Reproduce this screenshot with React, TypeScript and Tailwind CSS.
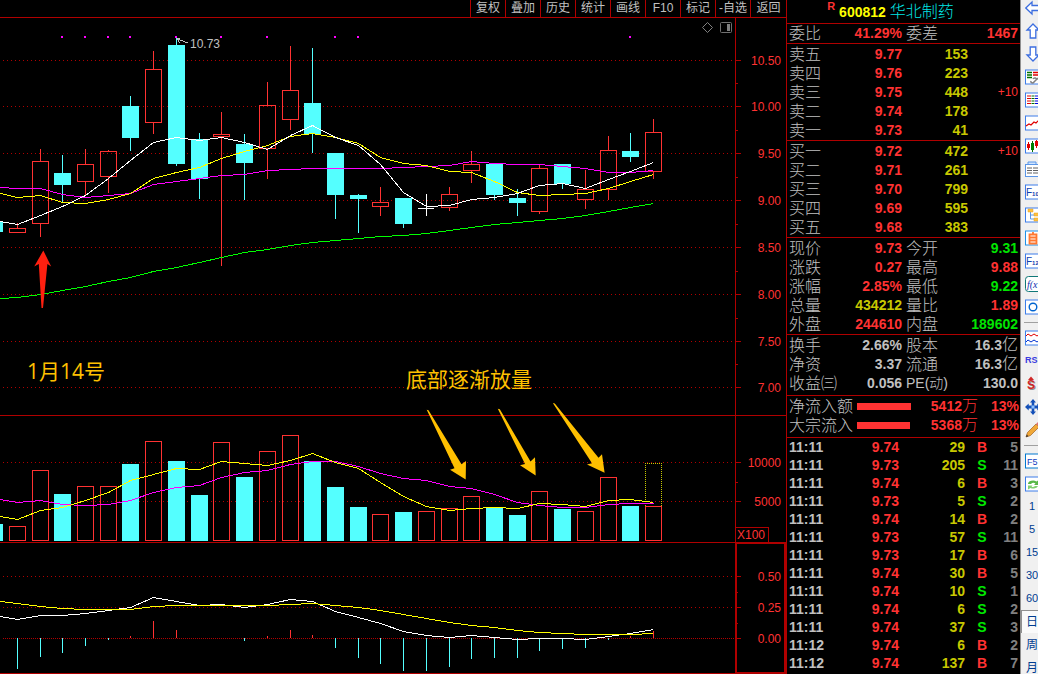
import React from "react";

type Candle = {
  x: number;
  up?: boolean;
  flat?: boolean;
  body: [number, number];
  wick: [number, number];
  vol: number;
};

const RED = "#ff3232";
const CYAN = "#54ffff";
const LINE = "#b00000";

const XS = [
  0, 17, 40, 62, 85, 108, 130, 153, 176, 199, 221, 244, 267, 290, 312, 335, 358, 380, 403, 426, 449, 471, 494, 517,
  539, 562, 585, 608, 630, 653,
];

const CANDLES: Candle[] = [
  { x: -6, body: [221, 232], wick: [221, 232], vol: 524 },
  { x: 17, up: true, body: [228, 233], wick: [223, 233], vol: 526 },
  { x: 40, up: true, body: [161, 224], wick: [149, 237], vol: 470 },
  { x: 62, body: [173, 185], wick: [155, 202], vol: 494 },
  { x: 85, up: true, body: [164, 182], wick: [149, 195], vol: 486 },
  { x: 108, up: true, body: [151, 177], wick: [150, 193], vol: 486 },
  { x: 130, body: [106, 138], wick: [96, 151], vol: 464 },
  { x: 153, up: true, body: [69, 123], wick: [51, 134], vol: 441 },
  { x: 176, body: [45, 164], wick: [38, 166], vol: 461 },
  { x: 199, body: [139, 179], wick: [133, 199], vol: 495 },
  { x: 221, up: true, body: [134, 137], wick: [112, 266], vol: 442 },
  { x: 244, body: [144, 163], wick: [134, 200], vol: 477 },
  { x: 267, up: true, body: [105, 149], wick: [82, 179], vol: 451 },
  { x: 290, up: true, body: [90, 120], wick: [46, 130], vol: 435 },
  { x: 312, body: [103, 134], wick: [48, 153], vol: 461 },
  { x: 335, body: [153, 195], wick: [153, 219], vol: 487 },
  { x: 358, body: [195, 199], wick: [194, 233], vol: 507 },
  { x: 380, up: true, body: [202, 207], wick: [187, 216], vol: 514 },
  { x: 403, body: [198, 224], wick: [198, 228], vol: 512 },
  { x: 426, up: true, flat: true, body: [208, 209], wick: [194, 216], vol: 511 },
  { x: 449, up: true, body: [194, 208], wick: [187, 211], vol: 508 },
  { x: 471, up: true, body: [164, 171], wick: [151, 183], vol: 496 },
  { x: 494, body: [164, 195], wick: [164, 200], vol: 507 },
  { x: 517, body: [198, 203], wick: [189, 216], vol: 515 },
  { x: 539, up: true, body: [168, 212], wick: [165, 214], vol: 491 },
  { x: 562, body: [164, 184], wick: [164, 189], vol: 509 },
  { x: 585, up: true, body: [189, 200], wick: [170, 209], vol: 511 },
  { x: 608, up: true, body: [150, 190], wick: [136, 200], vol: 477 },
  { x: 630, body: [151, 157], wick: [133, 162], vol: 506 },
  { x: 653, up: true, body: [132, 172], wick: [119, 179], vol: 506 },
];

const MA5 = [221, 224, 215, 206, 195, 178, 160, 142, 137, 140, 137, 142, 149, 135, 125, 137, 145, 164, 192, 206, 205, 199, 197, 193, 185, 183, 188, 179, 171, 162];
const MA10 = [193, 197, 195, 202, 203, 199, 193, 178, 172, 167, 158, 151, 145, 136, 133, 137, 143, 157, 163, 165, 171, 172, 181, 192, 195, 194, 193, 188, 181, 174];
const MA20 = [187, 188, 188, 194, 197, 195, 193, 184, 181, 178, 175, 174, 170, 169, 168, 168, 168, 168, 167, 166, 165, 161, 163, 164, 164, 166, 168, 172, 172, 170];
const MA60 = [298, 297, 294, 290, 286, 281, 277, 271, 267, 262, 257, 252, 249, 245, 242, 240, 238, 236, 235, 233, 230, 227, 224, 222, 220, 218, 215, 211, 207, 203];
const VMA5 = [516, 519, 510, 507, 500, 492, 480, 474, 468, 469, 461, 463, 465, 460, 453, 462, 468, 482, 496, 506, 510, 508, 507, 508, 503, 504, 506, 500, 499, 502];
const VMA10 = [499, 502, 500, 504, 505, 504, 500, 492, 487, 485, 477, 472, 470, 464, 461, 461, 466, 473, 478, 480, 486, 488, 494, 502, 505, 507, 507, 504, 503, 503];
const DIF = [616, 619, 615, 615, 613, 610, 607, 597, 601, 605, 604, 607, 604, 599, 601, 611, 617, 623, 631, 635, 637, 635, 637, 639, 638, 638, 639, 636, 633, 629];
const DEA = [601, 603, 606, 608, 609, 609, 609, 606, 605, 605, 605, 605, 605, 604, 603, 605, 607, 610, 614, 618, 622, 625, 627, 630, 632, 633, 634, 634, 634, 633];

const HIST: [number, number][] = [
  [17, 669], [40, 657], [62, 653], [85, 646], [108, 640], [130, 636], [153, 621], [176, 630], [244, 641], [267, 636],
  [290, 630], [312, 635], [335, 648], [358, 658], [380, 664], [403, 671], [426, 671], [449, 667], [471, 659],
  [494, 658], [517, 658], [539, 651], [562, 649], [585, 648], [608, 640], [630, 636], [653, 631],
];

const SIGNAL_DOTS = [62, 85, 108, 130, 176, 221, 267, 335, 358, 630];

const PRICE_LABELS: [number, string][] = [
  [60, "10.50"], [106, "10.00"], [153, "9.50"], [200, "9.00"], [247, "8.50"], [294, "8.00"], [341, "7.50"], [387, "7.00"],
];

function Grid({ y, dense }: { y: number; dense?: boolean }) {
  return (
    <line x1="3" x2="100%" y1={y + 0.5} y2={y + 0.5} stroke={LINE} strokeDasharray={dense ? "1 1" : "1 3"} />
  );
}

function Curve({ ys, color }: { ys: number[]; color: string }) {
  return (
    <polyline fill="none" stroke={color} points={ys.map((y, i) => `${XS[i]}.5,${y}.5`).join(" ")} />
  );
}

function PricePlot() {
  return (
    <svg className="block h-full w-full" shapeRendering="crispEdges" role="img" aria-label="日K线">
      <g transform="translate(0 -18)">
        {PRICE_LABELS.map(([y]) => (
          <Grid key={y} y={y} />
        ))}
        {CANDLES.map((c) => {
          const [t, b] = c.body;
          const [hi, lo] = c.wick;
          if (c.flat) {
            return (
              <g key={c.x} fill="#ffffff">
                <rect x={c.x} y={hi} width="1" height={lo - hi} />
                <rect x={c.x - 8} y={t} width="16" height="1" />
              </g>
            );
          }
          if (c.up) {
            return (
              <g key={c.x}>
                <rect x={c.x} y={hi} width="1" height={t - hi} fill={RED} />
                <rect x={c.x} y={b} width="1" height={lo - b} fill={RED} />
                <rect x={c.x - 7.5} y={t + 0.5} width="16" height={b - t - 1} fill="none" stroke={RED} />
              </g>
            );
          }
          return (
            <g key={c.x} fill={CYAN}>
              <rect x={c.x} y={hi} width="1" height={lo - hi} />
              <rect x={c.x - 8} y={t} width="17" height={b - t} />
            </g>
          );
        })}
        <Curve ys={MA60} color="#00ff00" />
        <Curve ys={MA20} color="#ff00ff" />
        <Curve ys={MA10} color="#ffff00" />
        <Curve ys={MA5} color="#ffffff" />
        <path d="M176.500 38.500h3M177.500 39l10.500 4M177.500 39l2 4" fill="none" stroke="#c0c0c0" />
        {SIGNAL_DOTS.map((x) => (
          <rect key={x} x={x - 1} y="36" width="2" height="2" fill="#ff00ff" />
        ))}
        <text x="190" y="48" fontSize="12" fill="#c0c0c0">10.73</text>
      </g>
    </svg>
  );
}

function VolumePlot() {
  return (
    <svg className="block h-full w-full" shapeRendering="crispEdges" role="img" aria-label="成交量">
      <g transform="translate(0 -416)">
        <Grid y={462} />
        <Grid y={501} />
        {CANDLES.map((c) =>
          c.up ? (
            <rect key={c.x} x={c.x - 7.5} y={c.vol + 0.5} width="16" height={540 - c.vol} fill="none" stroke={RED} />
          ) : (
            <rect key={c.x} x={c.x - 8} y={c.vol} width="17" height={541 - c.vol} fill={CYAN} />
          ),
        )}
        <path d="M645.500 506V463.500H661.500V506" fill="none" stroke="#c8c800" strokeDasharray="1 1" />
        <Curve ys={VMA10} color="#ff00ff" />
        <Curve ys={VMA5} color="#ffff00" />
      </g>
    </svg>
  );
}

function MacdPlot() {
  return (
    <svg className="block h-full w-full" shapeRendering="crispEdges" role="img" aria-label="MACD">
      <g transform="translate(0 -543)">
        <Grid y={576} />
        <Grid y={607} />
        <Grid y={638} dense />
        {HIST.map(([x, y]) => (
          <rect
            key={x}
            x={x}
            y={Math.min(y, 638)}
            width="1"
            height={Math.abs(y - 638)}
            fill={y < 638 ? RED : CYAN}
          />
        ))}
        <Curve ys={DIF} color="#ffffff" />
        <Curve ys={DEA} color="#ffff00" />
      </g>
    </svg>
  );
}

function Axis({ top, left, labels, minor }: { top: number; left: number; labels: [number, string][]; minor: number[] }) {
  return (
    <svg className="block h-full w-full">
      <g transform={`translate(${-left} ${-top})`}>
        {labels.map(([y, t]) => (
          <g key={y}>
            <rect x="0" y={y} width="5" height="1" fill={LINE} />
            <text x="45" y={y + 5} fontSize="12" textAnchor="end" fill={RED}>{t}</text>
          </g>
        ))}
        {minor.map((y) => (
          <rect key={y} x="0" y={y} width="2" height="1" fill={LINE} />
        ))}
      </g>
    </svg>
  );
}

function Annotations() {
  return (
    <svg className="pointer-events-none absolute inset-0 h-full w-full font-['Open_Sans','Noto_Sans_CJK_SC',sans-serif]">
      <g transform="translate(0 -18)">
        <polygon points="43.300,250.500 51.200,266.500 47.400,264 43,308 41.500,308 38.800,264 34.200,266.500" fill="#ff2010" />
        <g fill="#ffc000">
          <polygon points="426.700,409.700 428.500,410.200 461.500,464.300 466,461 465.700,479.500 450,469.700 454.500,468.300" />
          <polygon points="497.800,408.700 499.800,409.200 530.500,461.500 535,457.300 535.700,475.500 520,465.300 525,464" />
          <polygon points="552.800,403 554.800,403.500 598.500,457.700 602,454.300 604.600,472.700 587,464.500 592,463.300" />
          <text x="27" y="379" fontSize="21">1月14号</text>
          <text x="406" y="387" fontSize="21">底部逐渐放量</text>
        </g>
      </g>
    </svg>
  );
}

const MENU = ["复权", "叠加", "历史", "统计", "画线", "F10", "标记", "-自选", "返回"];

function ChartArea() {
  return (
    <main className="flex min-w-0 flex-1 flex-col">
      <nav className="flex h-[18px] justify-end border-b border-[#b00000] text-xs leading-none text-[#c0c0c0]">
        {MENU.map((m) => (
          <button key={m} type="button" className="w-[35px] border-l border-[#b00000] pb-[2px] whitespace-nowrap last:w-[36px]">
            {m}
          </button>
        ))}
      </nav>
      <div className="relative flex flex-col">
        <section className="flex h-[398px] border-b border-[#b00000]">
          <div className="min-w-0 flex-1"><PricePlot /></div>
          <div className="w-[51px] border-l border-[#b00000]">
            <Axis top={18} left={0} labels={PRICE_LABELS} minor={[83, 130, 177, 224, 271, 318, 364]} />
          </div>
        </section>
        <section className="flex h-[127px] border-b border-[#b00000]">
          <div className="min-w-0 flex-1"><VolumePlot /></div>
          <div className="relative w-[51px] border-l border-[#b00000]">
            <Axis top={416} left={0} labels={[[462, "10000"], [501, "5000"]]} minor={[482]} />
            <span className="absolute bottom-0 left-0 border-t border-r border-[#b00000] pr-[3px] pl-px text-xs leading-[14px] text-[#ff3232]">
              X100
            </span>
          </div>
        </section>
        <section className="flex h-[131px] border-b border-[#b00000]">
          <div className="min-w-0 flex-1"><MacdPlot /></div>
          <div className="w-[51px] border-2 border-t-1 border-b-1 border-[#b00000]">
            <Axis top={544} left={1} labels={[[576, "0.50"], [607, "0.25"], [638, "0.00"]]} minor={[592, 623]} />
          </div>
        </section>
        <Annotations />
        <div className="absolute top-1 right-[54px] flex gap-[7px]">
          <button type="button" aria-label="标记点">
            <svg width="11" height="11" className="block"><path d="M5.500 .5l5 5-5 5-5-5z" fill="none" stroke="#808080" /></svg>
          </button>
          <button type="button" aria-label="侧栏">
            <svg width="12" height="11" className="block">
              <rect x=".5" y=".5" width="11" height="10" rx="1" fill="none" stroke="#707070" />
              <rect x="7" y="2" width="3" height="7" fill="#808080" />
            </svg>
          </button>
        </div>
      </div>
    </main>
  );
}

const SELL = [["卖五", "9.77", "153", ""], ["卖四", "9.76", "223", ""], ["卖三", "9.75", "448", "+10"], ["卖二", "9.74", "178", ""], ["卖一", "9.73", "41", ""]];
const BUY = [["买一", "9.72", "472", "+10"], ["买二", "9.71", "261", ""], ["买三", "9.70", "799", ""], ["买四", "9.69", "595", ""], ["买五", "9.68", "383", ""]];

function Levels({ rows }: { rows: string[][] }) {
  return (
    <table className="w-full table-fixed border-b border-[#b00000]">
      <colgroup>
        <col className="w-[50px]" />
        <col className="w-[65px]" />
        <col className="w-[66px]" />
        <col />
      </colgroup>
      <tbody>
        {rows.map(([l, p, v, d]) => (
          <tr key={l} className="h-[19px]">
            <th scope="row" className="p-0 pl-[2px] text-left text-base leading-[19px] font-light whitespace-nowrap text-[#c0c0c0]">{l}</th>
            <td className="p-0 text-right leading-[19px] font-bold text-[#ff3232]">{p}</td>
            <td className="p-0 text-right leading-[19px] font-bold text-[#c8c800]">{v}</td>
            <td className="p-0 pr-[2px] text-right text-xs leading-[19px] text-[#ff3232]">{d}</td>
          </tr>
        ))}
      </tbody>
    </table>
  );
}

const R = "text-[#ff3232]";
const G = "text-[#00e600]";
const Y = "text-[#c8c800]";
const W = "text-[#c0c0c0]";

const STATS = [
  ["现价", "9.73", R, "今开", "9.31", G],
  ["涨跌", "0.27", R, "最高", "9.88", R],
  ["涨幅", "2.85%", R, "最低", "9.22", G],
  ["总量", "434212", Y, "量比", "1.89", R],
  ["外盘", "244610", R, "内盘", "189602", G],
];
const BASICS = [
  ["换手", "2.66%", W, "股本", "16.3亿", W],
  ["净资", "3.37", W, "流通", "16.3亿", W],
  ["收益㈢", "0.056", W, "PE(动)", "130.0", W],
];

function Pairs({ rows }: { rows: string[][] }) {
  return (
    <table className="w-full table-fixed">
      <colgroup>
        <col className="w-[50px]" />
        <col className="w-[65px]" />
        <col className="w-[50px]" />
        <col />
      </colgroup>
      <tbody>
        {rows.map(([a, av, ac, b, bv, bc]) => (
          <tr key={a} className="h-[19px]">
            <th scope="row" className="p-0 pl-[2px] text-left text-base leading-[19px] font-light whitespace-nowrap text-[#c0c0c0]">{a}</th>
            <td className={`p-0 text-right leading-[19px] font-bold ${ac}`}>{av}</td>
            <th
              scope="row"
              className={`p-0 pl-1 text-left leading-[19px] font-light whitespace-nowrap text-[#c0c0c0] ${b.startsWith("PE") ? "text-sm" : "text-base"}`}
            >
              {b}
            </th>
            <td className={`p-0 pr-[2px] text-right leading-[19px] font-bold whitespace-nowrap ${bc}`}>
              {bv.replace("亿", "")}
              {bv.endsWith("亿") && <span className="text-base leading-none font-light">亿</span>}
            </td>
          </tr>
        ))}
      </tbody>
    </table>
  );
}

const FLOWS = [["净流入额", "w-[54px]", "5412"], ["大宗流入", "w-[53px]", "5368"]];

const TICKS = [
  ["11:11", "9.74", "29", "B", "5"],
  ["11:11", "9.73", "205", "S", "11"],
  ["11:11", "9.74", "6", "B", "3"],
  ["11:11", "9.73", "5", "S", "2"],
  ["11:11", "9.74", "14", "B", "2"],
  ["11:11", "9.73", "57", "S", "11"],
  ["11:11", "9.73", "17", "B", "6"],
  ["11:11", "9.74", "30", "B", "5"],
  ["11:11", "9.74", "10", "S", "1"],
  ["11:11", "9.74", "6", "S", "2"],
  ["11:11", "9.74", "37", "S", "3"],
  ["11:12", "9.74", "6", "B", "2"],
  ["11:12", "9.74", "137", "B", "7"],
];

function QuotePanel() {
  return (
    <aside className="w-[234px] shrink-0 border-l border-[#b00000] text-sm">
      <h1 className="flex h-[24px] items-center justify-center border-b border-[#b00000] pr-[26px] leading-none whitespace-nowrap">
        <sup className="mr-1 text-[11px] leading-none font-bold text-[#ff3232]">R</sup>
        <span className="mr-1 font-bold text-[#ffff00]">600812</span>
        <span className="text-base leading-none font-light text-[#00e6e6]">华北制药</span>
      </h1>
      <div className="border-b border-[#b00000]">
        <Pairs rows={[["委比", "41.29%", R, "委差", "1467", R]]} />
      </div>
      <div className="pt-px"><Levels rows={SELL} /></div>
      <div className="pt-px"><Levels rows={BUY} /></div>
      <div className="border-b border-[#b00000] pt-px"><Pairs rows={STATS} /></div>
      <div className="border-b border-[#b00000] pt-px pb-[2px]"><Pairs rows={BASICS} /></div>
      <div className="border-b border-[#b00000] pt-px pb-[2px]">
        <table className="w-full table-fixed">
          <colgroup>
            <col className="w-[69px]" />
            <col />
            <col className="w-[66px]" />
            <col className="w-[42px]" />
          </colgroup>
          <tbody>
            {FLOWS.map(([l, w, v]) => (
              <tr key={l} className="h-[19px]">
                <th scope="row" className="p-0 pl-[2px] text-left text-base leading-[19px] font-light whitespace-nowrap text-[#c0c0c0]">{l}</th>
                <td className="p-0 pl-px"><div className={`h-[7px] bg-[#ff3232] ${w}`} /></td>
                <td className="p-0 text-right leading-[19px] font-bold whitespace-nowrap text-[#ff3232]">
                  {v}
                  <span className="text-base leading-none font-light">万</span>
                </td>
                <td className="p-0 pr-px text-right leading-[19px] font-bold text-[#ff3232]">13%</td>
              </tr>
            ))}
          </tbody>
        </table>
      </div>
      <table className="w-full table-fixed">
        <colgroup>
          <col className="w-[50px]" />
          <col className="w-[62px]" />
          <col className="w-[66px]" />
          <col className="w-[34px]" />
          <col />
        </colgroup>
        <tbody>
          {TICKS.map(([t, p, v, s, n], i) => (
            <tr key={i} className="h-[18px] font-bold">
              <td className="p-0 pl-[2px] leading-[18px] text-[#c0c0c0]">{t}</td>
              <td className="p-0 text-right leading-[18px] text-[#ff3232]">{p}</td>
              <td className="p-0 text-right leading-[18px] text-[#c8c800]">{v}</td>
              <td className={`p-0 text-center leading-[18px] ${s === "B" ? R : G}`}>{s}</td>
              <td className="p-0 pr-[2px] text-right leading-[18px] text-[#808080]">{n}</td>
            </tr>
          ))}
        </tbody>
      </table>
    </aside>
  );
}

function Frame({ color = "#3c7dea", children }: { color?: string; children?: React.ReactNode }) {
  return (
    <svg width="22" height="16" className="block shrink-0">
      <rect x=".5" y="1" width="21" height="14" fill="#ffffff" stroke={color} />
      {children}
    </svg>
  );
}

function KeyLabel({ digits }: { digits: string }) {
  return (
    <text x="1" y="12" fontSize="10" fill="#1040b0">
      F<tspan fontSize="6" fontWeight="bold">{digits}</tspan>
    </text>
  );
}

const ARROW = { fill: "#ffffff", stroke: "#3c6ee0", strokeWidth: 1.3 };

const TOOLS: [string, React.ReactNode][] = [
  ["后退", <svg width="22" height="16" className="block"><path d="M.8 8L7 2v3.500h12v5H7V14z" {...ARROW} /></svg>],
  ["上移", <svg width="22" height="16" className="block"><path d="M8 1l6 6h-3.200v8H5.200V7H2z" {...ARROW} /></svg>],
  ["下移", <svg width="22" height="16" className="block"><path d="M8 15l6-6h-3.200V1H5.200v8H2z" {...ARROW} /></svg>],
  ["分时成交", (
    <Frame>
      <path d="M2 3.500h5M2 6h5M2 8.500h5" stroke="#007000" strokeWidth="1.300" />
      <path d="M8 3.500h5M8 6h5" stroke="#e00000" strokeWidth="1.300" />
      <path d="M6 12c-.5 2 2 2.500 3 1l4-4M8 10c1-2 4-1 4 1" fill="none" stroke="#808080" strokeWidth="1.500" />
    </Frame>
  )],
  ["行情报价", (
    <Frame>
      <path d="M2 4h4M2 6.500h4M2 9h4M2 11.500h4" stroke="#e00000" />
      <path d="M6.500 4h3M6.500 6.500h3M6.500 9h3M6.500 11.500h3" stroke="#007000" />
      <path d="M10 4h4M10 6.500h4M10 9h4M10 11.500h4" stroke="#0000e0" />
    </Frame>
  )],
  ["分时走势", <Frame><path d="M1 11l3-2 2 1 3-3 2 1 3-3 2 1" fill="none" stroke="#e00000" strokeWidth="1.200" /></Frame>],
  ["K线图", (
    <Frame>
      <path d="M3.500 4v8M11.500 2v8" stroke="#e00000" />
      <path d="M7.500 3v11" stroke="#007000" />
      <path d="M2 6h3v4H2zM10 3h3v5h-3z" fill="#e00000" />
      <path d="M6 5h3v7H6z" fill="#008000" />
    </Frame>
  )],
  ["资讯", (
    <svg width="22" height="16" className="block">
      <path d="M3 3V1h8v2" fill="#cfe4ff" stroke="#5a96e8" />
      <rect x=".5" y="3.500" width="21" height="12" fill="#ffffff" stroke="#5a96e8" />
      <path d="M2 7h5M8 7h5M2 9.500h5M8 9.500h5M2 12h5M8 12h5" stroke="#606060" />
    </svg>
  )],
  ["F10资料", <Frame><KeyLabel digits="10" /></Frame>],
  ["板块树", (
    <Frame>
      <path d="M5.500 5v7H9M5.500 8H9" fill="none" stroke="#5a96e8" />
      <path d="M3 2h5v3H3zM9 6h5v3H9zM9 11h5v3H9z" fill="#ffc040" stroke="#e0a020" strokeWidth=".5" />
    </Frame>
  )],
  ["自选股", <Frame color="#1e90e8"><path d="M4.500 4.500h7v9h-7zM4.500 7.500h7M4.500 10.500h7M8 2v2.500" fill="none" stroke="#ff7830" strokeWidth="1.800" /></Frame>],
  ["F12委托", <Frame><KeyLabel digits="12" /></Frame>],
  ["公式", (
    <svg width="22" height="16" className="block font-['Liberation_Serif',serif]">
      <rect x=".5" y=".5" width="21" height="15" rx="3" fill="#ffffff" stroke="#107878" />
      <text x="2" y="12" fontSize="10" fontStyle="italic" fill="#1030b0">f(x</text>
    </svg>
  )],
  ["圈选", <Frame><circle cx="8" cy="8" r="3.800" fill="none" stroke="#0064d0" strokeWidth="1.400" /></Frame>],
];

const TOOLS_2: [string, React.ReactNode][] = [
  ["多图", (
    <Frame>
      <path d="M1 6l2-2 3 2 3-2 3 2 3-2" fill="none" stroke="#e00000" />
      <path d="M1 12l2-2 3 2 3-2 3 2 3-2" fill="none" stroke="#0030d0" />
    </Frame>
  )],
  ["RSI", <span className="text-[9px] leading-none font-bold text-[#3c3ce0]">RS</span>],
  ["资金", (
    <svg width="22" height="16" className="block">
      <text x="3" y="14" fontSize="12" fontWeight="bold" fill="#909090" aria-hidden="true">S</text>
      <text x="2" y="13" fontSize="12" fontWeight="bold" fill="#d02828">S</text>
      <path d="M3 4l3-3.500L9 4z" fill="#d02828" />
    </svg>
  )],
  ["移动", (
    <svg width="22" height="16" className="block">
      <path d="M8 0l3 3.500H9.300v3h3V4.500L16 8l-3.700 3.500v-2h-3v3H11L8 16l-3-3.500h1.700v-3h-3v2L0 8l3.700-3.500v2h3v-3H5z" fill="#1450b8" />
      <rect x="6.500" y="6.500" width="3" height="3" fill="#8cc0ff" />
    </svg>
  )],
  ["画笔", (
    <svg width="22" height="16" className="block">
      <path d="M1 15l1.500-4.500L11 2l3 3-8.500 8.500z" fill="#f0a838" stroke="#a06020" strokeWidth=".7" />
      <path d="M11 2l2-2 3 3-2 2z" fill="#e07070" />
      <path d="M1 15l.8-2.400 1.600 1.600z" fill="#303030" />
    </svg>
  )],
];

const TOOLS_3: [string, React.ReactNode][] = [
  ["F5切换", <Frame color="#0078d0"><text x="2" y="12" fontSize="9" fill="#1040c0">F5</text></Frame>],
  ["刷新", (
    <Frame>
      <path d="M3 8a5 3.500 0 0 1 8.500-2.500L14 4v5H9l1.500-1.500A3 2 0 0 0 6 8z" fill="#58b848" />
      <path d="M13 10a5 3.500 0 0 1-7.500 2L3 13.500V9.500h4.500L6.500 11A3 2 0 0 0 10 10z" fill="#80d070" />
    </Frame>
  )],
];

const PERIODS = [
  ["1", "pl-2"],
  ["5", "pl-2"],
  ["15", "pl-[5px]"],
  ["30", "pl-[5px]"],
  ["60", "pl-[5px]"],
];

function ToolButtons({ items }: { items: [string, React.ReactNode][] }) {
  return (
    <>
      {items.map(([label, icon]) => (
        <button key={label} type="button" aria-label={label} className="flex h-[23px] w-[32px] shrink-0 items-center pl-1">
          {icon}
        </button>
      ))}
    </>
  );
}

function Divider() {
  return (
    <div className="flex h-2 shrink-0 items-center pl-[3px]">
      <div className="h-px w-full bg-[#a0a0a0]" />
    </div>
  );
}

function Toolbar() {
  return (
    <div role="toolbar" aria-label="工具栏" className="w-[18px] shrink-0 overflow-hidden border-l border-[#909090] bg-[#f0f0f0]">
      <div className="-mt-1 flex flex-col">
        <ToolButtons items={TOOLS} />
        <Divider />
        <ToolButtons items={TOOLS_2} />
        <Divider />
        <ToolButtons items={TOOLS_3} />
        {PERIODS.map(([p, pad]) => (
          <button key={p} type="button" className={`flex h-[23px] w-[32px] shrink-0 items-center text-[11px] text-[#003c90] ${pad}`}>
            {p}
          </button>
        ))}
        {["日", "周", "月"].map((p, i) => (
          <button
            key={p}
            type="button"
            aria-pressed={i === 0}
            className={`flex h-[23px] w-[32px] shrink-0 items-center border-t border-l pl-1 text-xs leading-none text-[#003c90] ${
              i === 0 ? "border-[#909090] bg-[#fafafa]" : "border-transparent"
            }`}
          >
            {p}
          </button>
        ))}
      </div>
    </div>
  );
}

export default function App() {
  return (
    <div className="flex h-screen overflow-hidden bg-black font-['Liberation_Sans','Noto_Sans_CJK_SC',sans-serif]">
      <ChartArea />
      <QuotePanel />
      <Toolbar />
    </div>
  );
}
